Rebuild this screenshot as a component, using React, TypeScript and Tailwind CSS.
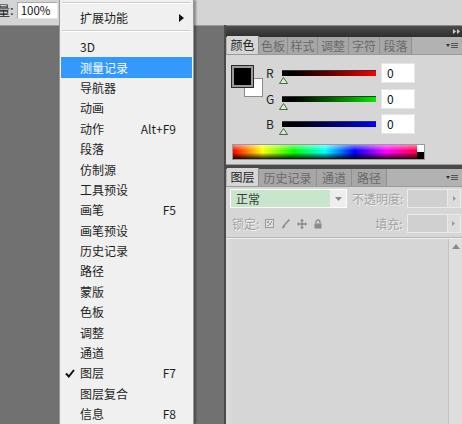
import React from "react";

type Item = { label: string; keys?: string; active?: boolean; checked?: boolean };

const items: Item[] = [
  { label: "3D" },
  { label: "测量记录", active: true },
  { label: "导航器" },
  { label: "动画" },
  { label: "动作", keys: "Alt+F9" },
  { label: "段落" },
  { label: "仿制源" },
  { label: "工具预设" },
  { label: "画笔", keys: "F5" },
  { label: "画笔预设" },
  { label: "历史记录" },
  { label: "路径" },
  { label: "蒙版" },
  { label: "色板" },
  { label: "调整" },
  { label: "通道" },
  { label: "图层", keys: "F7", checked: true },
  { label: "图层复合" },
  { label: "信息", keys: "F8" },
];

const colorTabs = [
  { label: "颜色", w: "w-[32px]" },
  { label: "色板", w: "w-[29px]" },
  { label: "样式", w: "w-[30px]" },
  { label: "调整", w: "w-[31px]" },
  { label: "字符", w: "w-[31px]" },
  { label: "段落", w: "w-[32px]" },
];

const layerTabs = [
  { label: "图层", w: "w-[32px]" },
  { label: "历史记录", w: "w-[58px]" },
  { label: "通道", w: "w-[35px]" },
  { label: "路径", w: "w-[35px]" },
];

function Separator() {
  return (
    <div className="mx-[2px] h-[2px] border-t border-[#cdcdcd] border-b border-b-white" />
  );
}

function Tabs({ tabs }: { tabs: { label: string; w: string }[] }) {
  return (
    <div className="flex h-[18px] items-end bg-[#b2b2b2] pl-[1px] border-b border-[#9a9a9a]">
      {tabs.map((t, i) => (
        <div
          key={t.label}
          className={`${t.w} flex items-center justify-center border-r border-[#8f8f8f] ${
            i === 0 ? "bg-[#d6d6d6] text-[#1c1c1c] h-[18px]" : "bg-[#a7a7a7] text-[#6a6a6a] h-[17px]"
          }`}
        >
          {t.label}
        </div>
      ))}
      <div className="flex-1" />
      <div className="flex h-full items-center gap-[1px] pr-[4px]">
        <svg width="4" height="3" viewBox="0 0 4 3">
          <path d="M0 0H4L2 3Z" fill="#333" />
        </svg>
        <svg width="7" height="7" viewBox="0 0 7 7">
          <path d="M0 1.5H7M0 3.5H7M0 5.5H7" stroke="#555" strokeWidth="1" />
        </svg>
      </div>
    </div>
  );
}

function Slider({ from, to }: { from: string; to: string }) {
  return (
    <div className="relative w-[94px] h-[6px]">
      <div className={`h-full border-t border-[#333] bg-gradient-to-r ${from} ${to}`} />
      <svg className="absolute left-[-3px] top-[7px]" width="9" height="7" viewBox="0 0 9 7">
        <path d="M4.5 0.5L8.5 6.5H0.5Z" fill="#d8eed8" stroke="#3e6a3e" strokeWidth="1" />
      </svg>
    </div>
  );
}

function ColorRow({ label, from, to }: { label: string; from: string; to: string }) {
  return (
    <div className="flex h-[25.5px] items-start">
      <div className="flex h-[20px] items-center">
        <span className="w-[16px] pl-[2px] text-[#222]">{label}</span>
        <div className="ml-[2px]">
          <Slider from={from} to={to} />
        </div>
      </div>
      <div className="ml-[5px] h-[20px] w-[34px] bg-white border border-[#e6e6e6] pl-[5px] leading-[18px] text-[#111]">
        0
      </div>
    </div>
  );
}

function SmallBox() {
  return (
    <div className="flex h-[19px]">
      <div className="w-[41px] bg-[#d0d0d0] border border-[#eaeaea]" />
      <div className="w-[13px] bg-[#dcdcdc] border border-[#eaeaea] border-l-0 flex items-center justify-center">
        <svg width="3" height="5" viewBox="0 0 3 5">
          <path d="M0 0L3 2.5L0 5Z" fill="#9a9a9a" />
        </svg>
      </div>
    </div>
  );
}

export default function App() {
  return (
    <div
      className="relative w-[462px] h-[424px] overflow-hidden bg-[#717171] text-[12px] leading-none"
      style={{ fontFamily: '"Noto Sans CJK SC", "Noto Sans", sans-serif' }}
    >
      <div className="flex h-full flex-col">
        {/* options bar */}
        <div className="flex h-[26px] shrink-0 items-start bg-[#d4d4d4] border-b border-[#9c9c9c]">
          <span className="ml-[-3px] mt-[3px] text-[#222] text-[13px]">量:</span>
          <div className="ml-[3px] mt-[2px] h-[17px] w-[41px] bg-white border border-[#a9a9a9] border-r-[#e4e4e4] border-b-[#e4e4e4] pl-[3px] leading-[15px] text-[#111] text-[11.5px]">
            100%
          </div>
        </div>

        <div className="flex min-h-0 flex-1">
          {/* canvas area */}
          <div className="flex-1 bg-[#717171]" />

          {/* panel dock */}
          <div className="mt-[-1px] flex w-[238px] flex-col border-l-2 border-[#4a4a4a] bg-[#d6d6d6]">
            <div className="flex h-[12px] items-center justify-end border-t border-[#8a8a8a] bg-gradient-to-b from-[#4c4c4c] to-[#2e2e2e] pr-[2px]">
              <svg width="7" height="5" viewBox="0 0 7 5">
                <path d="M0 0L3 2.5L0 5ZM4 0L7 2.5L4 5Z" fill="#cfcfcf" />
              </svg>
            </div>

            <Tabs tabs={colorTabs} />

            {/* color panel body */}
            <div className="flex h-[109px] flex-col">
              <div className="flex pt-[8px]">
                <div className="relative ml-[6px] mt-[3px] h-[32px] w-[32px]">
                  <div className="absolute left-[12px] top-[12px] h-[19px] w-[19px] bg-white border border-[#8a8a8a]" />
                  <div className="absolute left-0 top-0 h-[21px] w-[21px] bg-black border-2 border-[#9a9a9a] outline outline-1 outline-[#2a2a2a]" />
                </div>
                <div className="flex flex-col">
                  <ColorRow label="R" from="from-black" to="to-[#ff0000]" />
                  <ColorRow label="G" from="from-black" to="to-[#00ee00]" />
                  <ColorRow label="B" from="from-black" to="to-[#0000ff]" />
                </div>
              </div>
              <div className="ml-[6px] mt-[4px] flex h-[16px] w-[193px] border border-[#9a9a9a]">
                <div className="flex-1 bg-[linear-gradient(to_bottom,rgba(255,255,255,0.5),rgba(255,255,255,0)_40%,rgba(0,0,0,0)_55%,rgba(0,0,0,0.9)),linear-gradient(to_right,#ff0000,#ffff00_16%,#00ff00_33%,#00ffff_50%,#0000ff_66%,#ff00ff_83%,#ff0040)]" />
                <div className="flex w-[7px] flex-col">
                  <div className="h-[7px] bg-white" />
                  <div className="flex-1 bg-black" />
                </div>
              </div>
            </div>

            <div className="h-[5px] bg-[#4a4a4a] border-t border-[#9a9a9a]" />

            <Tabs tabs={layerTabs} />

            {/* layers panel body */}
            <div className="flex min-h-0 flex-1 flex-col">
              <div className="mt-[2px] flex h-[19px] items-center">
                <div className="ml-[4px] flex h-[19px] w-[117px] border border-white">
                  <div className="flex flex-1 items-center bg-[#c7e6cb] pl-[5px] text-[#3a3a3a]">
                    正常
                  </div>
                  <div className="flex w-[16px] items-center justify-center bg-[#eeeeee]">
                    <svg width="7" height="4" viewBox="0 0 7 4">
                      <path d="M0 0H7L3.5 4Z" fill="#8a8a8a" />
                    </svg>
                  </div>
                </div>
                <span className="ml-[5px] text-[#a4a4a4] [text-shadow:1px_1px_0_#f0f0f0]">不透明度:</span>
                <div className="ml-[4px]">
                  <SmallBox />
                </div>
              </div>

              <div className="mt-[6px] flex h-[19px] items-center">
                <span className="ml-[6px] text-[#a4a4a4] [text-shadow:1px_1px_0_#f0f0f0]">锁定:</span>
                <div className="ml-[6px] flex items-center gap-[7px]">
                  <svg width="9" height="9" viewBox="0 0 9 9">
                    <rect x="0.5" y="0.5" width="8" height="8" fill="#e0e0e0" stroke="#9a9a9a" />
                    <rect x="2" y="2" width="2" height="2" fill="#a0a0a0" />
                    <rect x="4" y="4" width="2" height="2" fill="#a0a0a0" />
                    <rect x="6" y="2" width="1" height="2" fill="#a0a0a0" />
                    <rect x="2" y="6" width="2" height="1" fill="#a0a0a0" />
                  </svg>
                  <svg width="9" height="10" viewBox="0 0 9 10">
                    <path d="M8.5 0.5L3.5 6" stroke="#8a8a8a" strokeWidth="1.5" />
                    <path d="M3 5.5C1.5 6 2 8 0.5 9.5C2.5 9.5 4.5 8.5 4 6.5Z" fill="#8a8a8a" />
                  </svg>
                  <svg width="10" height="10" viewBox="0 0 10 10">
                    <path d="M5 0.5V9.5M0.5 5H9.5" stroke="#8a8a8a" strokeWidth="1.5" />
                    <path d="M5 0L7 2H3ZM5 10L3 8H7ZM0 5L2 3V7ZM10 5L8 7V3Z" fill="#8a8a8a" />
                  </svg>
                  <svg width="8" height="10" viewBox="0 0 8 10">
                    <path d="M2 4.5V3A2 2 0 0 1 6 3V4.5" stroke="#8a8a8a" strokeWidth="1.3" fill="none" />
                    <rect x="0.5" y="4.5" width="7" height="5" fill="#8a8a8a" />
                  </svg>
                </div>
                <span className="ml-[53px] text-[#a4a4a4] [text-shadow:1px_1px_0_#f0f0f0]">填充:</span>
                <div className="ml-[4px]">
                  <SmallBox />
                </div>
              </div>

              <div className="mt-[4px] h-[2px] border-t border-[#b8b8b8] border-b border-b-[#efefef]" />

              <div className="flex min-h-0 flex-1">
                <div className="flex-1 bg-[#d6d6d6] border-l-[5px] border-[#dadada]" />
                <div className="w-[14px] border-l border-[#c2c2c2] bg-[#dedede] pt-[5px] flex justify-center">
                  <svg width="8" height="5" viewBox="0 0 8 5">
                    <path d="M4 0L8 5H0Z" fill="#8a8a8a" />
                  </svg>
                </div>
              </div>
            </div>
          </div>
        </div>
      </div>

      {/* Window menu */}
      <div className="absolute left-[59px] top-0 h-[424px] w-[135px] bg-[#f0f0f0] border-x border-[#979797] shadow-[2px_0_2px_rgba(0,0,0,0.35)] text-[#1e1e1e]">
        <div className="pt-[2px]">
          <Separator />
        </div>
        <div className="relative mt-[4px] flex h-[20px] items-center pl-[20px]">
          扩展功能
          <svg className="absolute right-[9px] top-[6px]" width="5" height="8" viewBox="0 0 5 8">
            <path d="M0 0L5 4L0 8Z" fill="#111" />
          </svg>
        </div>
        <div className="mt-[2px]">
          <Separator />
        </div>
        <div className="mt-[5px]">
          {items.map((it) => (
            <div
              key={it.label}
              className={`relative mx-[1px] flex h-[20.4px] items-center pl-[19px] pr-[16px] ${
                it.active ? "bg-[#3399ff] text-white" : ""
              }`}
            >
              {it.checked && (
                <svg className="absolute left-[4px] top-[6px]" width="10" height="9" viewBox="0 0 10 9">
                  <path d="M1 4.5L3.8 7.5L9 1" stroke="#111" strokeWidth="2" fill="none" />
                </svg>
              )}
              <span className="flex-1">{it.label}</span>
              {it.keys && <span>{it.keys}</span>}
            </div>
          ))}
        </div>
      </div>
    </div>
  );
}
